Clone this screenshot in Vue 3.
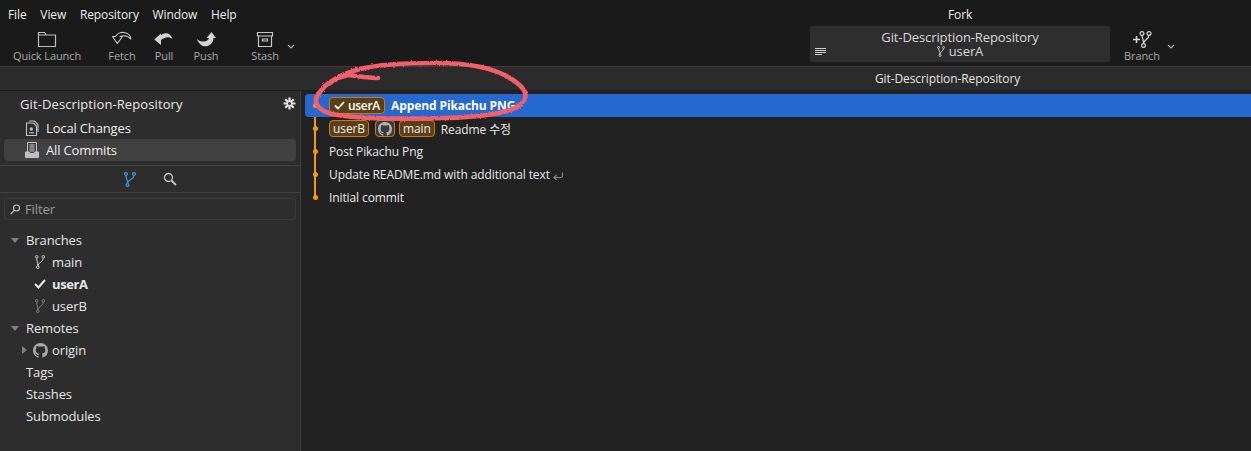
<script setup>
const menus = ['File', 'View', 'Repository', 'Window', 'Help']
const commits = [
  { id: 1, text: 'Append Pikachu PNG', selected: true, refs: [{ label: 'userA', check: true }] },
  { id: 2, text: 'Readme 수정', refs: [{ label: 'userB' }, { github: true }, { label: 'main' }] },
  { id: 3, text: 'Post Pikachu Png', refs: [] },
  { id: 4, text: 'Update README.md with additional text', refs: [], wrap: true },
  { id: 5, text: 'Initial commit', refs: [] },
]
const gh = 'M8 0C3.58 0 0 3.58 0 8c0 3.54 2.29 6.53 5.47 7.59.4.07.55-.17.55-.38 0-.19-.01-.82-.01-1.49-2.01.37-2.53-.49-2.69-.94-.09-.23-.48-.94-.82-1.13-.28-.15-.68-.52-.01-.53.63-.01 1.08.58 1.23.82.72 1.21 1.87.87 2.33.66.07-.52.28-.87.51-1.07-1.78-.2-3.64-.89-3.64-3.95 0-.87.31-1.59.82-2.15-.08-.2-.36-1.02.08-2.12 0 0 .67-.21 2.2.82.64-.18 1.32-.27 2-.27s1.36.09 2 .27c1.53-1.04 2.2-.82 2.2-.82.44 1.1.16 1.92.08 2.12.51.56.82 1.27.82 2.15 0 3.07-1.87 3.75-3.65 3.95.29.25.54.73.54 1.48 0 1.07-.01 1.93-.01 2.2 0 .21.15.46.55.38A8.01 8.01 0 0 0 16 8c0-4.42-3.58-8-8-8z'
</script>

<template>
  <div class="app">
    <header class="top">
      <div class="menurow">
        <nav class="menu"><span v-for="m in menus" :key="m">{{ m }}</span></nav>
        <div class="apptitle">Fork</div>
      </div>
      <div class="toolbar">
        <div class="tool t-quick">
          <svg width="20" height="16" viewBox="0 0 20 16" fill="none" stroke="#bdbdbd" stroke-width="1.2"><path d="M1.500 15V1h6l2 2.500h9V15zM1.500 3.500h8"/></svg>
          <span>Quick Launch</span>
        </div>
        <div class="tool t-fetch">
          <svg width="20" height="16" viewBox="0 0 20 16" fill="none" stroke="#c8c8c8" stroke-width="1.100" stroke-linejoin="round"><path d="M3.500 5C5 1.800 9 .6 12 1c4 .5 6.500 3 7 6.500-3-3-7-4-11-2.500h2.500L5.300 12 .5 5z"/></svg>
          <span>Fetch</span>
        </div>
        <div class="tool t-pull">
          <svg width="20" height="16" viewBox="0 0 20 16"><path fill="#d4d4d4" d="M.3 8L7 2v1.800C10 .5 16.500 1 18.500 7.500 15.500 5 11 5 7 8.500v5z"/></svg>
          <span>Pull</span>
        </div>
        <div class="tool t-push">
          <svg width="20" height="16" viewBox="0 0 20 16"><path fill="#d4d4d4" d="M15.500.5L20 6.500h-2.500c0 4.500-3.500 8.500-8.500 8.300C5.500 14.800 2 11 .8 7.500 3 9.500 5 10 7.500 10c3 0 5-1.500 5.500-3.500h-2.500z"/></svg>
          <span>Push</span>
        </div>
        <div class="tool t-stash">
          <svg width="18" height="16" viewBox="0 0 18 16" fill="none" stroke="#c8c8c8" stroke-width="1.200"><path d="M1.500 1h15v3.500h-15zM2.500 4.500V15h13V4.500M6.500 7.500h5v2h-5z"/></svg>
          <span>Stash</span>
        </div>
        <svg class="chev" width="8" height="5" viewBox="0 0 8 5" fill="none" stroke="#b0b0b0" stroke-width="1.100"><path d="M1 1l3 3 3-3"/></svg>
        <div class="spacer"></div>
        <div class="repobox">
          <svg class="lines" width="11" height="7" viewBox="0 0 11 7" stroke="#cfcfcf" stroke-width="1"><path d="M0 .5h11M0 2.500h11M0 4.500h11M0 6.500h7"/></svg>
          <div class="reponame">Git-Description-Repository</div>
          <div class="repobranch">
            <svg width="8" height="11" viewBox="0 0 8 11" fill="none" stroke="#cfcfcf" stroke-width=".9"><circle cx="1.500" cy="1.500" r="1"/><circle cx="6.500" cy="1.500" r="1"/><circle cx="3" cy="9.500" r="1"/><path d="M1.500 2.500C1.800 5 3 5 3 8.500M6.500 2.500C6.500 5 3.500 5 3 8.500"/></svg>
            <span>userA</span>
          </div>
        </div>
        <div class="tool t-branch">
          <svg width="21" height="17" viewBox="0 0 21 17" fill="none" stroke="#d8d8d8" stroke-width="1.200"><path d="M1 8.500h7M4.500 5v7" stroke-width="1.500"/><circle cx="10" cy="2.500" r="1.900"/><circle cx="17" cy="2.500" r="1.900"/><circle cx="11.500" cy="14.500" r="1.900"/><path d="M10 4.400c.3 3 1.500 4.500 1.500 8.200M17 4.400c0 4-5 3.700-5.500 8.200"/></svg>
          <span>Branch</span>
        </div>
        <svg class="chev c2" width="8" height="5" viewBox="0 0 8 5" fill="none" stroke="#b0b0b0" stroke-width="1.100"><path d="M1 1l3 3 3-3"/></svg>
      </div>
    </header>

    <div class="tabbar"><span>Git-Description-Repository</span></div>

    <div class="body">
      <aside class="side">
        <div class="sidehead">
          <span>Git-Description-Repository</span>
          <svg class="gear" width="13" height="13" viewBox="0 0 13 13"><g stroke="#e4e4e4" stroke-width="2.200"><path d="M6.500.5v12M.5 6.500h12M2.300 2.300l8.400 8.400M10.700 2.300l-8.400 8.400"/></g><circle cx="6.500" cy="6.500" r="1.500" fill="#2d2d2d"/></svg>
        </div>
        <div class="navitem">
          <svg width="14" height="16" viewBox="0 0 14 16" fill="none" stroke="#c4c4c4" stroke-width="1.100"><path d="M1.500 3h7l3 3v9.500h-10zM4 1h5.500l3.500 3.500V12"/><circle cx="6.300" cy="9" r="1.100" fill="#c4c4c4"/><path d="M4 12.800h5"/></svg>
          <span>Local Changes</span>
        </div>
        <div class="navitem active">
          <svg width="14" height="16" viewBox="0 0 14 16" fill="none" stroke="#c4c4c4" stroke-width="1"><path d="M2.500 10V.5h9V10M4.500 3h5M4.500 5h5M4.500 7h5M4.500 9h5"/><path d="M.5 10h3.500l1 1.500h4l1-1.500h3.500v5.500H.5z" fill="#bdbdbd"/></svg>
          <span>All Commits</span>
        </div>
        <div class="tabs">
          <svg width="12" height="15" viewBox="0 0 12 15" fill="none" stroke="#3f8fd6" stroke-width="1.300"><circle cx="2" cy="2" r="1.400"/><circle cx="10" cy="2" r="1.400"/><circle cx="3.500" cy="13" r="1.400"/><path d="M2 3.500c.3 4 1.500 4 1.500 8M10 3.500c0 4-6 4-6.500 8"/></svg>
          <svg width="14" height="14" viewBox="0 0 14 14" fill="none" stroke="#c8c8c8" stroke-width="1.300"><circle cx="5.500" cy="5.500" r="4"/><path d="M8.500 8.500l4.500 4.500" stroke-width="1.800"/></svg>
        </div>
        <div class="filterwrap">
          <div class="filter">
            <svg width="11" height="11" viewBox="0 0 11 11" fill="none" stroke="#c8c8c8" stroke-width="1.100"><circle cx="6.500" cy="4" r="3"/><path d="M4.300 6.300L.8 10"/></svg>
            <span>Filter</span>
          </div>
        </div>
        <ul class="tree">
          <li class="row lvl0"><i class="tri down"></i><span>Branches</span></li>
          <li class="row lvl1">
            <svg class="bicon" width="10" height="14" viewBox="0 0 10 14" fill="none" stroke="#cfcfcf" stroke-width="1"><circle cx="1.700" cy="1.800" r="1.300"/><circle cx="8.300" cy="1.800" r="1.300"/><circle cx="2.800" cy="12.200" r="1.300"/><path d="M1.700 3.100c.2 3 1.100 4 1.100 7.800M8.300 3.100c0 4-4.800 4-5.500 7.800"/></svg>
            <span>main</span>
          </li>
          <li class="row lvl1 bold">
            <svg class="bicon check" width="12" height="10" viewBox="0 0 12 10" fill="none" stroke="#e8e8e8" stroke-width="2"><path d="M1 5l3.500 3.500L11 1"/></svg>
            <span>userA</span>
          </li>
          <li class="row lvl1">
            <svg class="bicon" width="10" height="14" viewBox="0 0 10 14" fill="none" stroke="#808080" stroke-width="1"><circle cx="1.700" cy="1.800" r="1.300"/><circle cx="8.300" cy="1.800" r="1.300"/><circle cx="2.800" cy="12.200" r="1.300"/><path d="M1.700 3.100c.2 3 1.100 4 1.100 7.800M8.300 3.100c0 4-4.800 4-5.500 7.800"/></svg>
            <span>userB</span>
          </li>
          <li class="row lvl0"><i class="tri down"></i><span>Remotes</span></li>
          <li class="row lvl1 origin">
            <i class="tri right"></i>
            <svg class="ghicon" width="15" height="15" viewBox="0 0 16 16"><path fill="#a8a8a8" :d="gh"/></svg>
            <span>origin</span>
          </li>
          <li class="row lvl0 plain"><span>Tags</span></li>
          <li class="row lvl0 plain"><span>Stashes</span></li>
          <li class="row lvl0 plain"><span>Submodules</span></li>
        </ul>
      </aside>

      <main class="main">
        <div class="graphline"></div>
        <div v-for="c in commits" :key="c.id" class="commit" :class="{ selected: c.selected }">
          <i class="dot"></i>
          <template v-for="(r, i) in c.refs" :key="i">
            <span v-if="r.github" class="ref ghref"><svg width="14" height="14" viewBox="0 0 16 16"><path fill="#b4b4b4" :d="gh"/></svg></span>
            <span v-else class="ref" :class="{ checked: r.check }">
              <svg v-if="r.check" width="11" height="9" viewBox="0 0 11 9" fill="none" stroke="#fff" stroke-width="1.800"><path d="M1 4.500l3 3L10 1"/></svg>
              {{ r.label }}
            </span>
          </template>
          <span class="msg">{{ c.text }}</span>
          <svg v-if="c.wrap" class="wrapicon" width="10" height="8" viewBox="0 0 10 8" fill="none" stroke="#8c8c8c" stroke-width="1.100"><path d="M9.500 .5v3.500a1.500 1.500 0 0 1-1.500 1.500H1.500M3.500 3l-2.500 2.500L3.500 8"/></svg>
        </div>
      </main>
    </div>

    <svg class="scribble" width="1251" height="451" viewBox="0 0 1251 451" fill="none">
      <defs>
        <filter id="rough" x="-5%" y="-20%" width="110%" height="140%">
          <feTurbulence type="fractalNoise" baseFrequency="0.45" numOctaves="2" seed="4"/>
          <feDisplacementMap in="SourceGraphic" scale="2.500"/>
        </filter>
      </defs>
      <path filter="url(#rough)" d="M378 78C368 78 358 76 348 75C335 78 325 84 320 92C312 100 316 110 332 114C360 120 410 119 445 118C480 117 510 113 520 105C530 96 526 88 510 78C490 66 465 63 438 63C410 63 380 64 360 69C345 73 335 78 330 83" stroke="#f25f6a" stroke-width="4.600" stroke-linecap="round" stroke-linejoin="round"/>
    </svg>
  </div>
</template>

<style>
html, body { margin: 0; background: #222; }
</style>

<style scoped>
.app {
  position: relative;
  width: 1251px;
  height: 451px;
  overflow: hidden;
  background: #222;
  color: #e8e8e8;
  font-family: "Open Sans", "Noto Sans CJK KR", sans-serif;
  font-size: 12px;
  letter-spacing: -.1px;
}
.top { height: 66px; background: #1a1a1a; }
.menurow { height: 28px; display: flex; align-items: center; position: relative; }
.menu { display: flex; gap: 13.75px; padding-left: 8px; font-size: 12px; color: #eee; }
.apptitle { position: absolute; left: 948px; top: 6px; color: #eee; }
.toolbar { display: flex; align-items: flex-start; height: 38px; }
.tool { display: flex; flex-direction: column; align-items: center; font-size: 11px; color: #a9a9a9; width: 40px; }
.tool svg { height: 17px; margin-top: 3px; }
.tool span { line-height: 15px; margin-top: 0; white-space: nowrap; }
.t-quick { margin-left: 27px; width: 40px; }
.t-fetch { margin-left: 35px; }
.t-pull { margin-left: 2px; }
.t-push { margin-left: 2px; }
.t-stash { margin-left: 19px; }
.chev { margin: 16px 0 0 2px; }
.spacer { flex: 1; }
.repobox {
  position: relative;
  width: 300px; height: 36px; margin: -2px 0 0;
  background: #2e2e2e; border-radius: 3px;
  text-align: center; color: #d8d8d8; line-height: 14px;
  padding-top: 4px; box-sizing: border-box;
  font-size: 13px; letter-spacing: -.1px;
}
.lines { position: absolute; left: 5px; top: 22px; }
.repobranch { display: flex; justify-content: center; align-items: center; gap: 4px; }
.t-branch { margin-left: 12px; width: 40px; }
.c2 { margin: 16px 76px 0 5px; }

.tabbar {
  height: 23px; background: #2b2b2b; border-top: 1px solid #3c3c3c;
  border-bottom: 1px solid #1f1f1f;
  position: relative; line-height: 23px; color: #e4e4e4;
}
.tabbar span { position: absolute; left: 875px; }

.body { display: flex; height: 361px; }
.side { width: 300px; background: #2d2d2d; border-right: 1px solid #3d3d3d; flex: none; font-size: 13px; letter-spacing: -.1px; }
.sidehead { display: flex; align-items: center; justify-content: space-between; height: 25px; padding: 0 4px 1px 20px; letter-spacing: .1px; color: #e8e8e8; }
.navitem { display: flex; align-items: center; gap: 7px; height: 22px; margin: 0 4px; padding-left: 21px; color: #eee; border-radius: 4px; letter-spacing: -.15px; }
.navitem.active { background: #414141; }
.tabs { display: flex; justify-content: center; align-items: center; gap: 27px; height: 26px; margin-top: 4px; border-top: 1px solid #414141; border-bottom: 1px solid #414141; }
.filterwrap { padding: 5px 4px 0; }
.filter { height: 22px; display: flex; align-items: center; gap: 4px; padding-left: 5px; border: 1px solid #3b3b3b; border-radius: 3px; color: #9b9b9b; box-sizing: border-box; }
.tree { list-style: none; margin: 9px 0 0; padding: 0; }
.row { display: flex; align-items: center; height: 22px; color: #e6e6e6; }
.lvl0 { padding-left: 11px; gap: 7px; }
.lvl0.plain { padding-left: 26px; }
.lvl1 { padding-left: 35px; gap: 7px; }
.bold { font-weight: 700; padding-left: 34px; gap: 6px; letter-spacing: -.4px; }
.origin { padding-left: 22px; gap: 4px; }
.ghicon { margin-left: 2px; }
.tri { display: block; width: 0; height: 0; }
.tri.down { border-left: 4px solid transparent; border-right: 4px solid transparent; border-top: 5px solid #7f7f7f; }
.tri.right { border-top: 4px solid transparent; border-bottom: 4px solid transparent; border-left: 5px solid #7f7f7f; }

.main { flex: 1; position: relative; padding-top: 3px; }
.graphline { position: absolute; left: 13px; top: 3px; width: 2px; height: 103px; background: #f5990f; }
.commit { position: relative; display: flex; align-items: center; gap: 5px; height: 23px; margin-left: 4px; padding-left: 24px; color: #e8e8e8; border-radius: 4px 0 0 4px; }
.commit.selected { background: #2468d0; color: #fff; font-weight: 700; }
.dot { position: absolute; left: 7.5px; top: 9px; width: 5px; height: 5px; border-radius: 50%; background: #f5990f; }
.ref { display: inline-flex; align-items: center; gap: 3px; height: 17px; padding: 0 3px; border: 1px solid #c87a1a; border-radius: 4px; background: #5b3f17; color: #f0f0f0; font-weight: 400; box-sizing: border-box; }
.ref + .msg { margin-left: 1px; }
.ref.checked { padding: 0 4px; font-weight: 600; color: #fff; letter-spacing: -.3px; }
.ghref { padding: 0 2px; background: #3a3a3a; width: 20px; justify-content: center; margin: 0 -1px 0 1px; }
.wrapicon { margin-left: -2px; margin-top: 2px; }
.scribble { position: absolute; left: 0; top: 0; pointer-events: none; }
</style>
